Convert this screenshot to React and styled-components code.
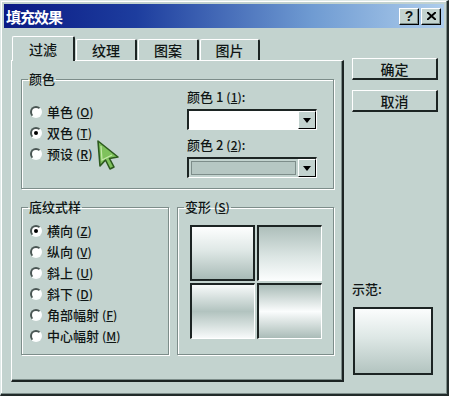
import React from "react";
import styled, { createGlobalStyle } from "styled-components";

const BG = "#c3d3cf";
const DARK = "#1c2423";
const SHADE = "#7d8d8a";

const GlobalStyle = createGlobalStyle`
    html, body {
        margin: 0;
        padding: 0;
        background: ${BG};
    }
    body {
        font-family: "Noto Sans CJK SC", "Liberation Sans", sans-serif;
        font-weight: 500;
        color: #101615;
    }
`;

const tabs = ["过滤", "纹理", "图案", "图片"];
const tabWidths = [63, 61, 61, 60];

const colorModes = [
    { label: "单色", key: "O" },
    { label: "双色", key: "T", checked: true },
    { label: "预设", key: "R" },
];

const shadings = [
    { label: "横向", key: "Z", checked: true },
    { label: "纵向", key: "V" },
    { label: "斜上", key: "U" },
    { label: "斜下", key: "D" },
    { label: "角部幅射", key: "F" },
    { label: "中心幅射", key: "M" },
];

const variants = [
    "linear-gradient(to bottom, #fdfefe 0%, #dfe8e6 45%, #a9bbb7 100%)",
    "linear-gradient(to bottom, #aebfbb 0%, #dbe5e3 55%, #fbfdfd 100%)",
    "linear-gradient(to bottom, #f7fafa 0%, #b2c3bf 50%, #f7fafa 100%)",
    "linear-gradient(to bottom, #aabcb8 0%, #fbfdfd 50%, #aabcb8 100%)",
];

const Radio = ({ label, mnemonic, checked }) => (
    <RadioRow>
        <RadioCircle>{checked && <RadioDot />}</RadioCircle>
        <RadioText>
            {label}
            <Paren>
                (<u>{mnemonic}</u>)
            </Paren>
        </RadioText>
    </RadioRow>
);

const Dropdown = ({ disabled }) => (
    <DropBox>
        <DropField $disabled={disabled} />
        <DropButton>
            <svg width="8" height="5" viewBox="0 0 8 5">
                <path d="M0 0 L8 0 L4 5 Z" fill="#000" />
            </svg>
        </DropButton>
    </DropBox>
);

const App = () => {
    return (
        <>
            <GlobalStyle />
            <Window>
                <TitleBar>
                    <TitleText>填充效果</TitleText>
                    <TitleButtons>
                        <TitleButton>?</TitleButton>
                        <TitleButton>
                            <svg width="9" height="8" viewBox="0 0 9 8">
                                <path d="M0 0 L9 8 M9 0 L0 8" stroke="#000" strokeWidth="2" />
                            </svg>
                        </TitleButton>
                    </TitleButtons>
                </TitleBar>

                <Body>
                    <LeftColumn>
                        <TabRow>
                            {tabs.map((t, i) => (
                                <Tab key={t} $active={i === 0} style={{ width: tabWidths[i] }}>
                                    {t}
                                </Tab>
                            ))}
                        </TabRow>
                        <TabPanel>
                            <GroupBox $height={118}>
                                <Legend>颜色</Legend>
                                <ColorsInner>
                                    <RadioColumn $top={14}>
                                        {colorModes.map((m) => (
                                            <Radio key={m.key} label={m.label} mnemonic={m.key} checked={m.checked} />
                                        ))}
                                    </RadioColumn>
                                    <PickColumn>
                                        <FieldLabel>
                                            颜色 1<Paren>(<u>1</u>):</Paren>
                                        </FieldLabel>
                                        <Dropdown />
                                        <FieldLabel $gap>
                                            颜色 2<Paren>(<u>2</u>):</Paren>
                                        </FieldLabel>
                                        <Dropdown disabled />
                                    </PickColumn>
                                </ColorsInner>
                            </GroupBox>

                            <BottomRow>
                                <GroupBox $height={156} $width={148}>
                                    <Legend>底纹式样</Legend>
                                    <RadioColumn $top={5}>
                                        {shadings.map((m) => (
                                            <Radio key={m.key} label={m.label} mnemonic={m.key} checked={m.checked} />
                                        ))}
                                    </RadioColumn>
                                </GroupBox>
                                <GroupBox $height={156} $width={157}>
                                    <Legend>
                                        变形<Paren>(<u>S</u>)</Paren>
                                    </Legend>
                                    <VariantGrid>
                                        {variants.map((v, i) => (
                                            <VariantTile key={i} $selected={i === 0} style={{ background: v }} />
                                        ))}
                                    </VariantGrid>
                                </GroupBox>
                            </BottomRow>
                        </TabPanel>
                    </LeftColumn>

                    <RightColumn>
                        <PushButton>确定</PushButton>
                        <PushButton>取消</PushButton>
                        <SampleBlock>
                            <SampleLabel>示范:</SampleLabel>
                            <SampleBox />
                        </SampleBlock>
                    </RightColumn>
                </Body>

                <Cursor width="24" height="32" viewBox="0 0 24 32">
                    <path
                        d="M1 1 L3 26 L8.5 20 L13 29 L17 27 L12.5 18.5 L21 17 Z"
                        fill="#7fc25c"
                        stroke="#2d5a1f"
                        strokeWidth="1.6"
                        strokeLinejoin="round"
                    />
                    <path d="M4 6 L5 20 L15 15" fill="none" stroke="#c4e8a8" strokeWidth="1.2" />
                </Cursor>
            </Window>
        </>
    );
};

export default App;

const Window = styled.div`
    position: relative;
    width: 449px;
    height: 396px;
    box-sizing: border-box;
    background: ${BG};
    padding: 3px;
    border-top: 1px solid #dfe9e7;
    border-left: 1px solid #dfe9e7;
    border-right: 2px solid #222b2a;
    border-bottom: 2px solid #222b2a;
    box-shadow: inset -1px -1px 0 ${SHADE}, inset 1px 1px 0 #ffffff;
    overflow: hidden;
`;

const TitleBar = styled.div`
    height: 24px;
    display: flex;
    align-items: center;
    justify-content: space-between;
    padding: 0 3px 0 2px;
    background: linear-gradient(to right, #0a1a84 0%, #1d3d9e 30%, #6f9bd2 70%, #aecdec 100%);
`;

const TitleText = styled.span`
    color: #ffffff;
    font-size: 15px;
    font-weight: 700;
    letter-spacing: -1px;
`;

const TitleButtons = styled.div`
    display: flex;
    gap: 2px;
`;

const TitleButton = styled.div`
    width: 20px;
    height: 17px;
    box-sizing: border-box;
    display: flex;
    align-items: center;
    justify-content: center;
    background: ${BG};
    border-top: 1px solid #ffffff;
    border-left: 1px solid #ffffff;
    border-right: 1px solid #000;
    border-bottom: 1px solid #000;
    box-shadow: inset -1px -1px 0 ${SHADE};
    font-family: "Liberation Sans", sans-serif;
    font-weight: 700;
    font-size: 14px;
    line-height: 1;
`;

const Body = styled.div`
    display: flex;
    gap: 8px;
    padding: 8px 0 0 7px;
`;

const LeftColumn = styled.div`
    width: 333px;
    display: flex;
    flex-direction: column;
`;

const TabRow = styled.div`
    display: flex;
    align-items: flex-end;
    height: 24px;
    padding-left: 1px;
    position: relative;
    z-index: 1;
`;

const Tab = styled.div`
    box-sizing: border-box;
    height: ${(p) => (p.$active ? "25px" : "21px")};
    margin-bottom: ${(p) => (p.$active ? "-1px" : "0")};
    display: flex;
    align-items: center;
    justify-content: center;
    font-size: 14px;
    background: ${BG};
    border-top: 1px solid #ffffff;
    border-left: 1px solid #ffffff;
    border-right: 2px solid ${DARK};
    border-radius: 2px 2px 0 0;
    ${(p) => (p.$active ? "" : "margin-left: 1px;")}
`;

const TabPanel = styled.div`
    box-sizing: border-box;
    height: 322px;
    padding: 10px 0 0 9px;
    border-top: 1px solid #ffffff;
    border-left: 1px solid #ffffff;
    border-right: 2px solid ${DARK};
    border-bottom: 2px solid ${DARK};
    box-shadow: inset -1px -1px 0 ${SHADE};
`;

const GroupBox = styled.fieldset`
    box-sizing: border-box;
    margin: 0;
    width: ${(p) => (p.$width ? `${p.$width}px` : "313px")};
    height: ${(p) => p.$height}px;
    padding: 0 0 0 8px;
    border: 1px solid ${SHADE};
    box-shadow: inset 1px 1px 0 #ffffff, 1px 1px 0 #ffffff;
    min-width: 0;
`;

const Legend = styled.legend`
    padding: 0 1px;
    margin-left: -2px;
    font-size: 13px;
    line-height: 16px;
`;

const ColorsInner = styled.div`
    display: flex;
`;

const RadioColumn = styled.div`
    width: 157px;
    padding-top: ${(p) => p.$top}px;
    display: flex;
    flex-direction: column;
`;

const RadioRow = styled.div`
    height: 21px;
    display: flex;
    align-items: center;
    gap: 5px;
`;

const RadioCircle = styled.div`
    width: 12px;
    height: 12px;
    box-sizing: border-box;
    border-radius: 50%;
    background: #ffffff;
    border: 2px solid;
    border-color: #4a5654 #fbfdfd #fbfdfd #4a5654;
    display: flex;
    align-items: center;
    justify-content: center;
`;

const RadioDot = styled.div`
    width: 4px;
    height: 4px;
    border-radius: 50%;
    background: #000;
`;

const RadioText = styled.span`
    font-size: 13px;
    line-height: 16px;
    white-space: nowrap;
`;

const Paren = styled.span`
    margin-left: 3px;
    font-size: 12px;
`;

const PickColumn = styled.div`
    width: 130px;
    padding-top: 1px;
    display: flex;
    flex-direction: column;
`;

const FieldLabel = styled.div`
    font-size: 13px;
    line-height: 18px;
    margin-top: ${(p) => (p.$gap ? "6px" : "0")};
    margin-bottom: 3px;
`;

const DropBox = styled.div`
    box-sizing: border-box;
    height: 21px;
    display: flex;
    border-top: 2px solid ${DARK};
    border-left: 2px solid ${DARK};
    border-right: 1px solid #ffffff;
    border-bottom: 1px solid #ffffff;
`;

const DropField = styled.div`
    flex: 1;
    background: ${(p) => (p.$disabled ? "#b6c7c3" : "#ffffff")};
    box-shadow: ${(p) => (p.$disabled ? `inset 1px 1px 0 ${SHADE}, inset -1px -1px 0 ${SHADE}` : "none")};
    margin: ${(p) => (p.$disabled ? "2px" : "0")};
`;

const DropButton = styled.div`
    width: 18px;
    box-sizing: border-box;
    display: flex;
    align-items: center;
    justify-content: center;
    background: ${BG};
    border-top: 1px solid #ffffff;
    border-left: 1px solid #ffffff;
    border-right: 1px solid #000;
    border-bottom: 1px solid #000;
`;

const BottomRow = styled.div`
    display: flex;
    gap: 8px;
    margin-top: 10px;
`;

const VariantGrid = styled.div`
    display: grid;
    grid-template-columns: 65px 65px;
    grid-auto-rows: 56px;
    gap: 2px;
    padding: 10px 0 0 4px;
`;

const VariantTile = styled.div`
    box-sizing: border-box;
    border-top: 2px solid ${DARK};
    border-left: 2px solid ${DARK};
    border-right: ${(p) => (p.$selected ? `2px solid ${DARK}` : "1px solid #ffffff")};
    border-bottom: ${(p) => (p.$selected ? `2px solid ${DARK}` : "1px solid #ffffff")};
`;

const RightColumn = styled.div`
    width: 86px;
    height: 346px;
    box-sizing: border-box;
    padding: 22px 0 7px;
    display: flex;
    flex-direction: column;
    gap: 10px;
`;

const PushButton = styled.div`
    height: 22px;
    box-sizing: border-box;
    display: flex;
    align-items: center;
    justify-content: center;
    font-size: 14px;
    background: ${BG};
    border-top: 1px solid #ffffff;
    border-left: 1px solid #ffffff;
    border-right: 2px solid ${DARK};
    border-bottom: 2px solid ${DARK};
`;

const SampleBlock = styled.div`
    margin-top: auto;
    display: flex;
    flex-direction: column;
    gap: 9px;
`;

const SampleLabel = styled.div`
    font-size: 13px;
    line-height: 18px;
`;

const SampleBox = styled.div`
    width: 80px;
    height: 68px;
    margin-left: 1px;
    box-sizing: border-box;
    border: 2px solid ${DARK};
    background: linear-gradient(to bottom, #fbfdfd 0%, #dde7e5 45%, #b3c4c0 100%);
`;

const Cursor = styled.svg`
    position: absolute;
    left: 96px;
    top: 139px;
`;
